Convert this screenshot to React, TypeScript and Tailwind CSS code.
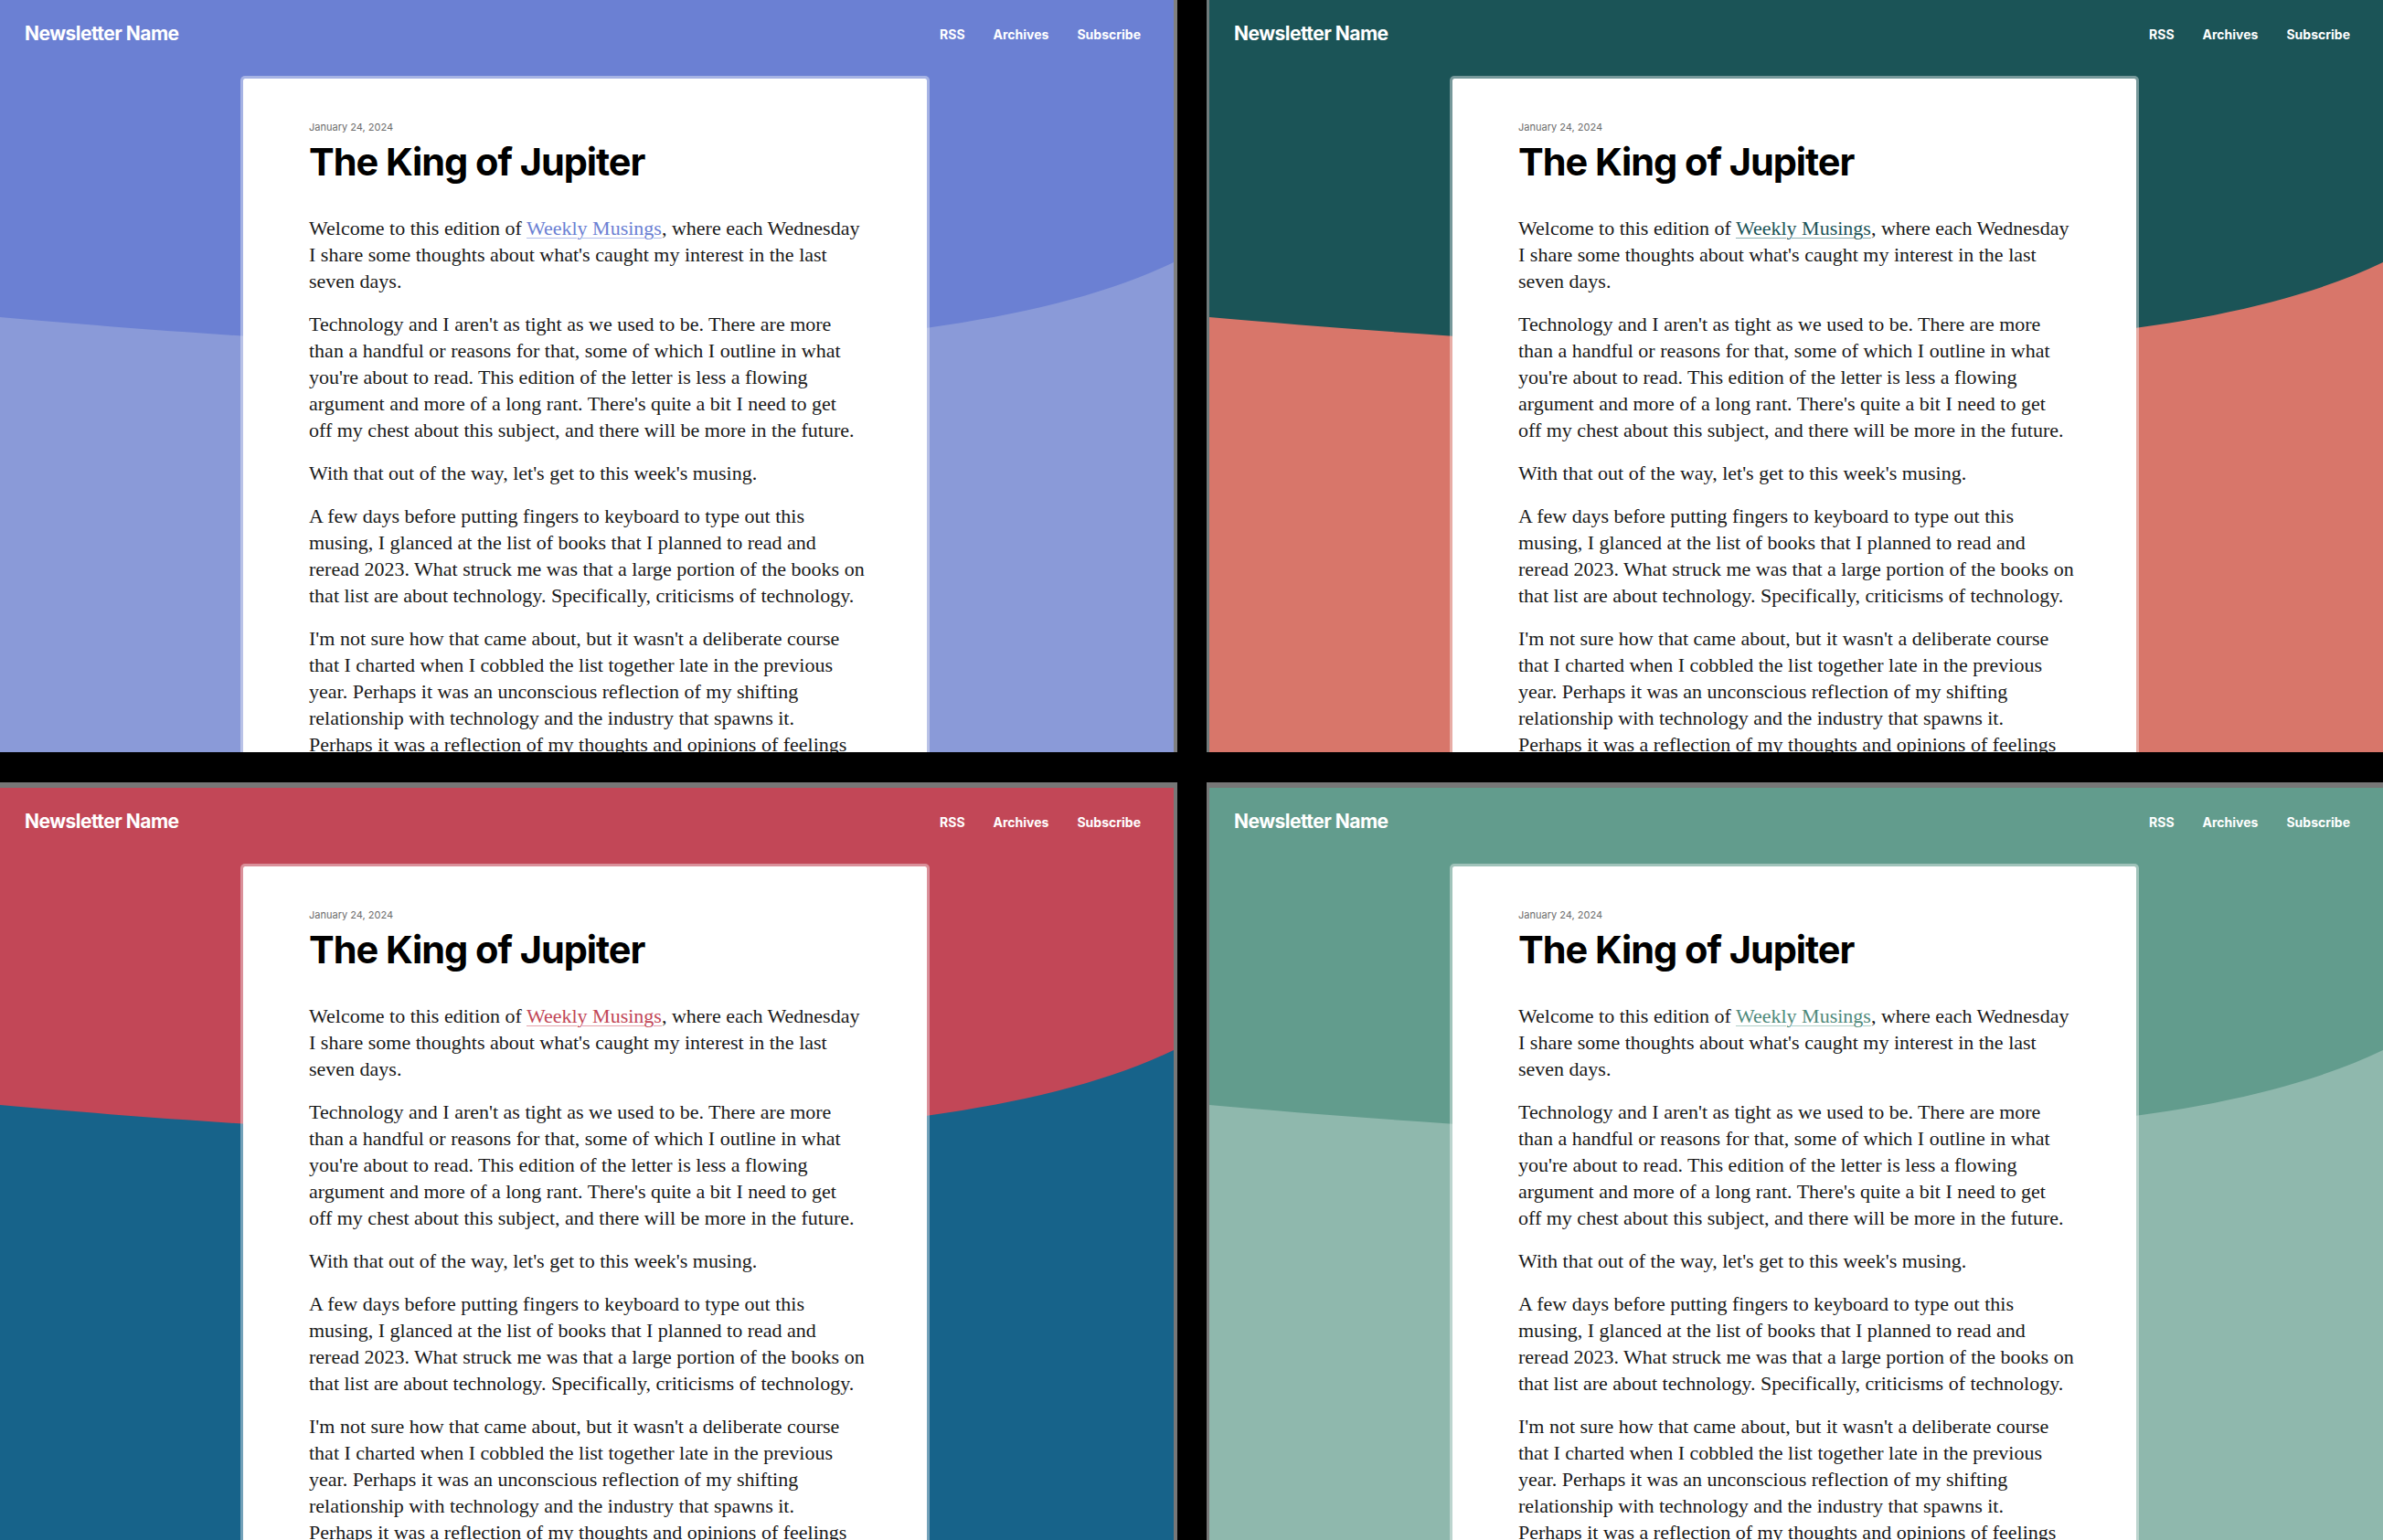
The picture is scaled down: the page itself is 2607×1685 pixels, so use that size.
const themes = [
  { top: 'bg-[#6b80d3]', wave: '#8a9ad8', link: 'text-[#6b80d3] decoration-[#b5bfeb]', edge: 'border-r-4 border-[#808080]' },
  { top: 'bg-[#1b5457]', wave: '#d8766a', link: 'text-[#1b5457] decoration-[#8fb0b2]', edge: 'border-l-[3px] border-[#6f7a7a]' },
  { top: 'bg-[#c24757]', wave: '#17638a', link: 'text-[#c24757] decoration-[#e3a3ab]', edge: 'border-r-4 border-t-[6px] border-[#777777]' },
  { top: 'bg-[#629c8d]', wave: '#8fb8ad', link: 'text-[#4f8a7b] decoration-[#b1d0c8]', edge: 'border-l-[3px] border-t-[6px] border-[#777777]' },
];

const serif = { fontFamily: '"Liberation Serif", "Times New Roman", serif' };
const sans = { fontFamily: 'Inter, "Noto Sans", sans-serif' };

export default function App() {
  return (
    <div className="w-[2607px] h-[1685px] bg-black grid grid-cols-[1288px_1287px] grid-rows-[823px_829px] gap-x-[32px] gap-y-[33px] overflow-hidden">
      {themes.map((t, i) => (
        <Panel key={i} theme={t} />
      ))}
    </div>
  );
}

function Panel({ theme }: { theme: (typeof themes)[number] }) {
  return (
    <div className={`${theme.edge} overflow-hidden`}>
      <div className={`relative h-[823px] w-[1284px] overflow-hidden ${theme.top}`}>
        <svg className="absolute inset-0 w-full h-full" viewBox="0 0 1284 823" preserveAspectRatio="none">
          <path d="M0 347 C 350 378, 1000 425, 1284 287 L1284 823 L0 823 Z" fill={theme.wave} />
        </svg>

        <div className="relative">
          <header className="h-[74px] flex items-center justify-between pl-[27px] pr-[36px] text-white" style={sans}>
            <div className="text-[21px] font-bold tracking-tight">Newsletter Name</div>
            <nav className="flex items-center gap-[31px] text-[14px] font-bold">
              <span>RSS</span>
              <span>Archives</span>
              <span>Subscribe</span>
            </nav>
          </header>

          <article className="mt-[9px] ml-[263px] w-[754px] rounded-[5px] border-[3px] border-white/40 bg-white bg-clip-padding pl-[72px] pt-[45px] pb-10">
            <div className="text-[11px] leading-4 text-[#6b6b6b]" style={sans}>January 24, 2024</div>
            <h1 className="mt-[5px] text-[41.5px] leading-[50px] font-bold tracking-tight text-black" style={sans}>
              The King of Jupiter
            </h1>

            <div className="mt-[33px] text-[22px] leading-[29px] text-[#1a1a1a] space-y-[18px] whitespace-nowrap" style={serif}>
              <p>
                Welcome to this edition of{' '}
                <a className={`${theme.link} underline underline-offset-[3px] decoration-1`}>Weekly Musings</a>, where each Wednesday
                <br />I share some thoughts about what's caught my interest in the last
                <br />seven days.
              </p>
              <p>
                Technology and I aren't as tight as we used to be. There are more
                <br />than a handful or reasons for that, some of which I outline in what
                <br />you're about to read. This edition of the letter is less a flowing
                <br />argument and more of a long rant. There's quite a bit I need to get
                <br />off my chest about this subject, and there will be more in the future.
              </p>
              <p>With that out of the way, let's get to this week's musing.</p>
              <p>
                A few days before putting fingers to keyboard to type out this
                <br />musing, I glanced at the list of books that I planned to read and
                <br />reread 2023. What struck me was that a large portion of the books on
                <br />that list are about technology. Specifically, criticisms of technology.
              </p>
              <p>
                I'm not sure how that came about, but it wasn't a deliberate course
                <br />that I charted when I cobbled the list together late in the previous
                <br />year. Perhaps it was an unconscious reflection of my shifting
                <br />relationship with technology and the industry that spawns it.
                <br />Perhaps it was a reflection of my thoughts and opinions of feelings
                <br />about the place that technology holds in our lives.
              </p>
            </div>
          </article>
        </div>
      </div>
    </div>
  );
}
